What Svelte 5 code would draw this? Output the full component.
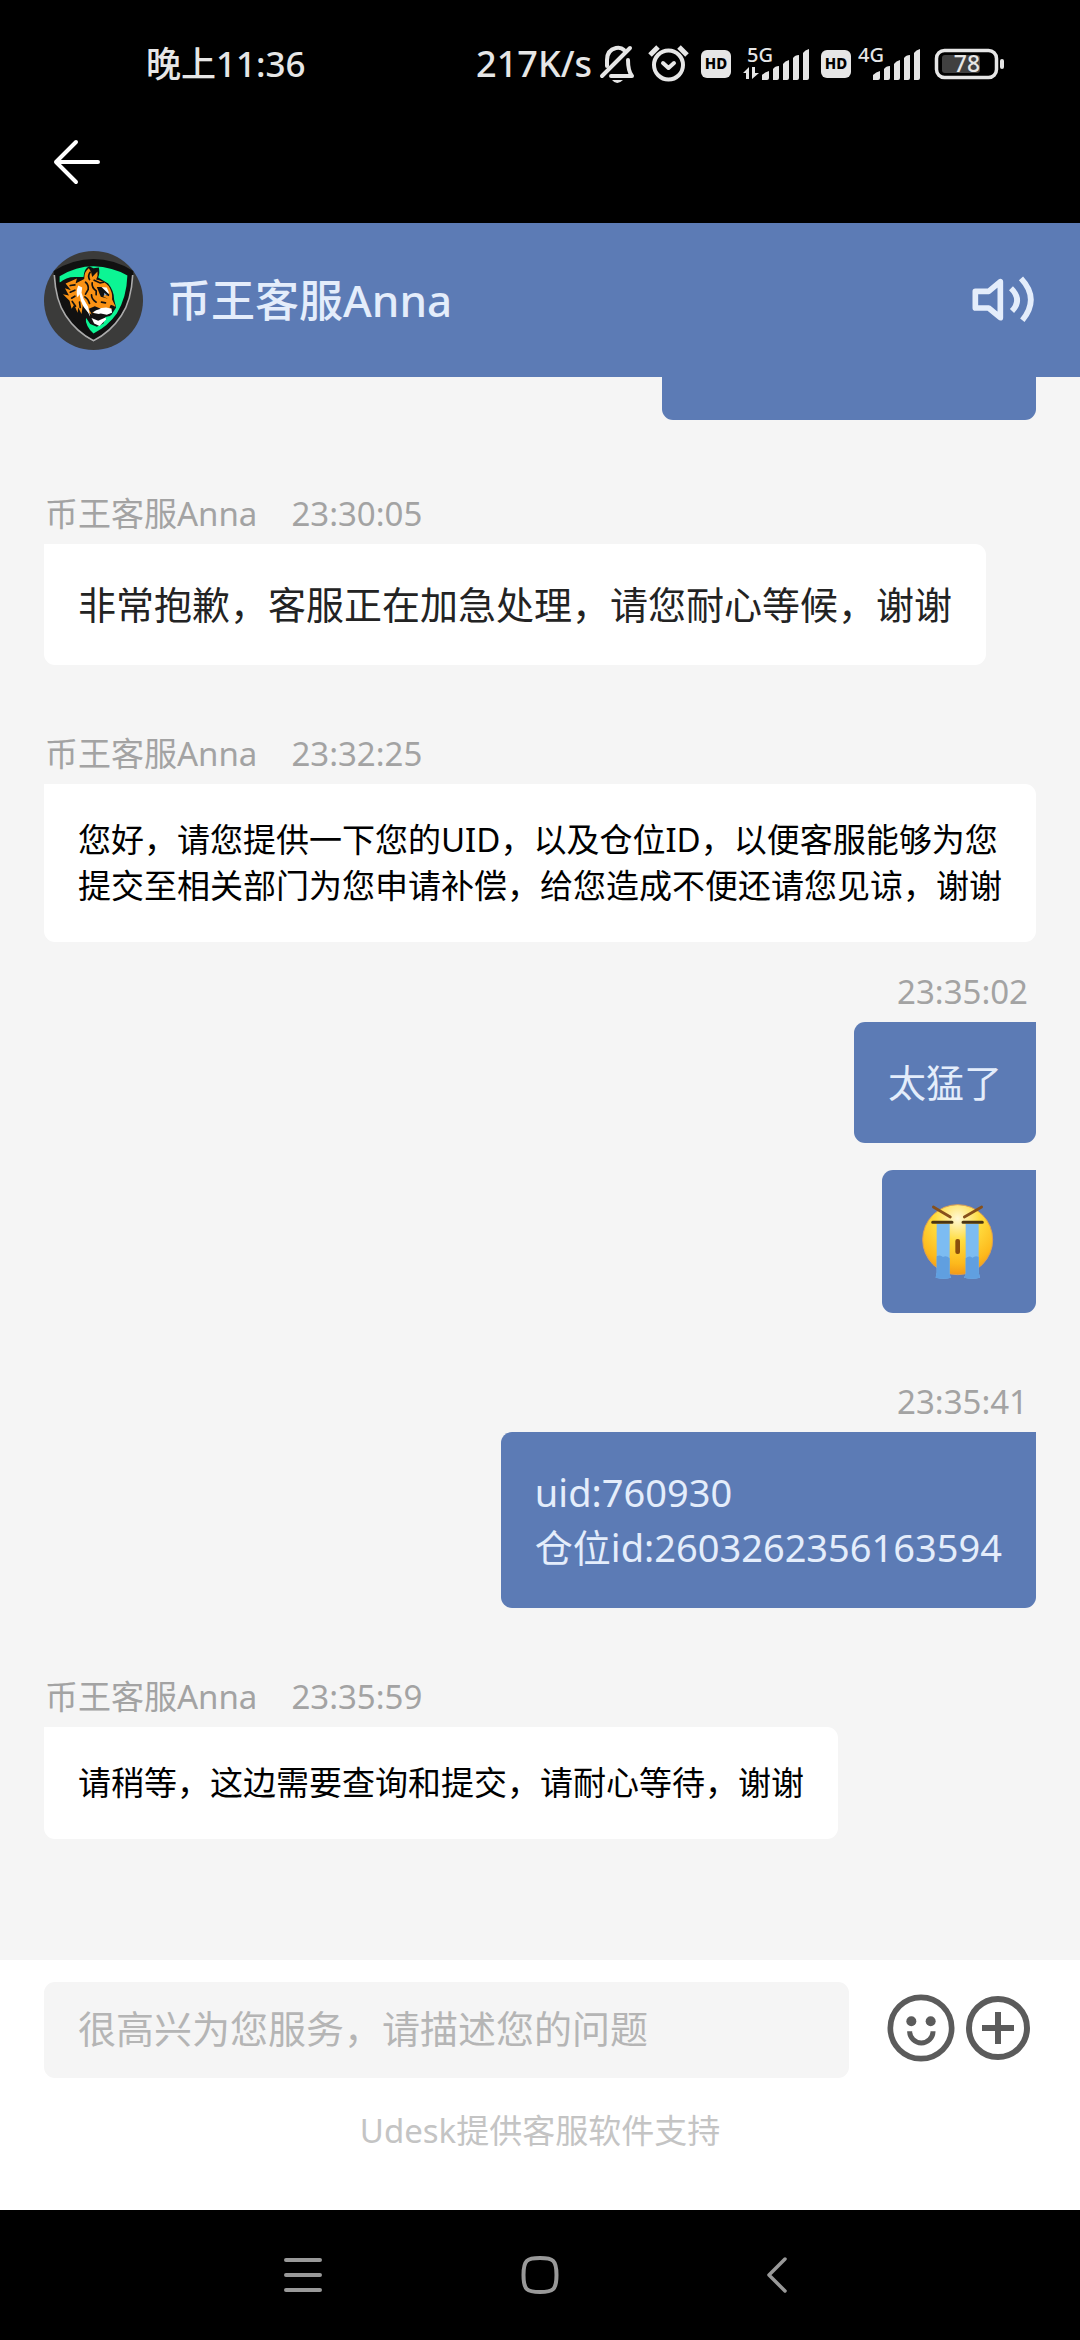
<script>
  const agent = '币王客服Anna';

  const messages = [
    { from: 'agent', time: '23:30:05', text: '非常抱歉，客服正在加急处理，请您耐心等候，谢谢', size: 'large' },
    {
      from: 'agent',
      time: '23:32:25',
      text: '您好，请您提供一下您的UID，以及仓位ID，以便客服能够为您提交至相关部门为您申请补偿，给您造成不便还请您见谅，谢谢',
      size: 'small'
    },
    { from: 'me', time: '23:35:02', text: '太猛了', size: 'large', close: true },
    { from: 'me', emoji: true, size: 'large', close: true },
    { from: 'me', time: '23:35:41', text: 'uid:760930\n仓位id:2603262356163594', size: 'large' },
    { from: 'agent', time: '23:35:59', text: '请稍等，这边需要查询和提交，请耐心等待，谢谢', size: 'small' }
  ];

  let draft = $state('');
</script>

{#snippet hd(x)}
  <svg width={x === 700 ? 34 : 32} height="56" viewBox="{x} 36 {x === 700 ? 34 : 32} 56" aria-hidden="true">
    <rect x={x + 1} y="50" width="30" height="28" rx="6" fill="#e6e6e6" />
    <text x={x + 16} y="69" text-anchor="middle" font-size="15" font-weight="800" fill="#000">HD</text>
  </svg>
{/snippet}

{#snippet bars(x)}
  <path
    fill="#e6e6e6"
    transform="translate({x} 0)"
    d="M0 80V75Q3 72 7 71V78Q7 80 5 80ZM11 80V69Q13 66 17 66V78Q17 80 15 80ZM21 80V64Q23 61 27 60V78Q27 80 25 80ZM31 80V58Q33 55 37 55V78Q37 80 35 80ZM41 80V53Q43 50 47 49V78Q47 80 45 80Z"
  />
{/snippet}

<div class="screen">
  <div class="status">
    <span class="clock">晚上11:36</span>
    <div class="indicators">
      <span>217K/s</span>
      <svg width="44" height="56" viewBox="598 36 44 56" fill="none" stroke="#e6e6e6" stroke-width="4" stroke-linecap="round" aria-hidden="true">
        <path d="M602 76L630 48" />
        <path d="M607 66V60Q607 50 616 48Q621 47 624 50" />
        <path d="M611 76H632Q628 71 628 60" stroke-linejoin="round" />
        <path d="M612 80H623Q617 86 612 80Z" fill="#e6e6e6" stroke="none" />
      </svg>
      <svg width="46" height="56" viewBox="648 36 46 56" fill="none" stroke="#e6e6e6" stroke-width="4" aria-hidden="true">
        <circle cx="668.5" cy="65" r="14.5" />
        <path d="M650 55L658 47M679 47L687 55" stroke-width="5" />
        <path d="M663 63L668.500 68L674 63" stroke-linecap="round" stroke-linejoin="round" />
      </svg>
      {@render hd(700)}
      <svg width="74" height="56" viewBox="740 36 74 56" fill="#e6e6e6" aria-hidden="true">
        <text x="747" y="62" font-size="20" font-weight="500">5G</text>
        <path d="M743 73L749 67V79H746V73ZM752 67H755V73H759L752 79Z" />
        {@render bars(762)}
      </svg>
      {@render hd(820)}
      <svg width="64" height="56" viewBox="858 36 64 56" fill="#e6e6e6" aria-hidden="true">
        <text x="858" y="62" font-size="20" font-weight="500">4G</text>
        {@render bars(873)}
      </svg>
      <svg width="78" height="56" viewBox="928 36 78 56" fill="#e6e6e6" aria-hidden="true">
        <rect x="936.500" y="50.500" width="60" height="27" rx="8" fill="none" stroke="#e6e6e6" stroke-width="3.500" />
        <rect x="942" y="55" width="38" height="18" rx="3" fill="#404040" />
        <rect x="1000" y="59" width="4" height="10" rx="2" />
        <text x="967" y="72" text-anchor="middle" font-size="23" font-weight="500">78</text>
      </svg>
    </div>
  </div>

  <nav class="appbar">
    <button aria-label="返回">
      <svg width="50" height="46" viewBox="0 0 50 46" fill="none" stroke="#fff" stroke-width="4" stroke-linecap="round" stroke-linejoin="round">
        <path d="M24 3L4 23L24 43M4 23H46" />
      </svg>
    </button>
  </nav>

  <header>
    <svg class="avatar" viewBox="11 14 298 298" role="img" aria-label={agent}>
      <circle cx="160" cy="163" r="149" fill="#3b3b3a" />
      <path d="M40 74Q98 38 160 38Q222 38 280 74Q278 160 246 210Q214 258 160 288Q106 258 74 210Q42 160 40 74Z" fill="#111" />
      <path d="M42 86Q46 164 76 208Q108 257 160 284Q212 257 244 208Q274 164 278 86" fill="none" stroke="#aaa" stroke-width="5" />
      <path d="M58 90Q108 60 160 60Q218 62 262 88Q260 154 230 202Q204 240 160 262Q136 242 136 214L126 140L90 110L58 108Z" fill="#0cf594" />
      <path d="M59 109Q76 92 104 92L130 92Q132 66 147 60L160 66L176 64Q180 82 174 94L204 112Q222 134 222 160L228 184L214 206L196 212L190 232L170 242L150 234L138 216Q134 222 138 244L82 202Q62 170 59 109Z" fill="#111" />
      <path d="M76 112L110 97L106 112L132 98Q132 76 146 66Q156 78 156 92L172 76Q174 90 168 100Q192 104 206 120Q218 138 216 160L226 180L210 192L188 186L170 194L160 208L146 200L136 186L128 176L124 204L114 184L112 200L102 176L94 188L88 164L68 144L86 148L74 126L92 132Z" fill="#fa9214" />
      <path d="M114 118Q106 138 112 154L118 144L122 164L130 182L144 200L150 212L144 182L130 158L124 140L126 124Z" fill="#fff" />
      <path d="M180 122L200 124L206 138L204 150L186 132ZM156 192L178 186L198 184L214 188L216 200L200 206L182 202L164 206Z" fill="#fff" />
      <path d="M154 216L174 224L196 214L198 220L188 230L178 240L162 232Z" fill="#fff" />
      <path d="M170 122L184 122L208 146L206 150L192 144L190 152L204 158L182 152ZM146 188L164 180L182 188L168 192L156 200L176 204L202 208L216 200L210 210L178 216L156 208ZM212 176L224 180L220 190L208 184Z" fill="#111" />
      <path d="M150 78Q142 88 148 100M162 102L180 110L190 108M136 108Q146 116 144 130L136 144M156 110Q154 124 168 134L168 146M134 152Q144 158 148 172M154 146Q154 160 168 168M104 116L90 118M104 132L90 138M104 150L94 156M96 166L106 180M118 168L120 184M184 168L196 170" fill="none" stroke="#111" stroke-width="5" stroke-linecap="round" />
      <path d="M192 140L200 146L192 149Z" fill="#7da3c9" />
    </svg>
    <h1>{agent}</h1>
    <button class="sound" aria-label="声音">
      <svg width="66" height="55" viewBox="990 157 198 165" fill="none" stroke="#e4edfb" stroke-width="17">
        <path d="M1006 212H1046L1081 183V291L1046 262H1006Z" stroke-linejoin="round" />
        <path d="M1113 203Q1148 237 1116 271M1143 173Q1200 234 1147 299" />
      </svg>
    </button>
  </header>

  <main>
    <div class="earlier"></div>
    {#each messages as m}
      <section class={[m.from, m.close && 'close']}>
        {#if m.time}
          <div class="meta">
            {#if m.from === 'agent'}<span>{agent}</span>{/if}
            <time>{m.time}</time>
          </div>
        {/if}
        <div class={['bubble', m.size]}>
          {#if m.emoji}
            <svg width="86" height="77" viewBox="405 732 258 231" role="img" aria-label="大哭">
              <defs>
                <radialGradient id="face" cx="0.5" cy="0.2" r="0.8">
                  <stop offset="0" stop-color="#fff8d6" />
                  <stop offset="0.4" stop-color="#ffdc3e" />
                  <stop offset="0.8" stop-color="#fdb91c" />
                  <stop offset="1" stop-color="#f39a16" />
                </radialGradient>
              </defs>
              <circle cx="530" cy="842" r="105" fill="url(#face)" stroke="#dda052" stroke-width="3" />
              <path d="M467 794H506V946L510 956Q488 962 464 956L467 940ZM554 794H593V940L597 956Q574 962 549 956L554 946Z" fill="#7cbcf2" />
              <path d="M467 892Q478 886 486 894Q496 888 506 898V946L510 956Q488 962 464 956L467 940ZM554 898Q564 888 574 896Q584 888 593 894V940L597 956Q574 962 549 956L554 946Z" fill="#609fe0" />
              <path d="M457 744L508 774M602 744L550 774" stroke="#87501a" stroke-width="8" stroke-linecap="round" />
              <path d="M455 790H513M546 790H604" stroke="#4b3512" stroke-width="9" stroke-linecap="round" />
              <rect x="523" y="840" width="14" height="45" rx="6" fill="#8b4e0d" />
            </svg>
          {:else}
            {m.text}
          {/if}
        </div>
      </section>
    {/each}
  </main>

  <footer>
    <form onsubmit={(e) => e.preventDefault()}>
      <input type="text" bind:value={draft} aria-label="消息" placeholder="很高兴为您服务，请描述您的问题" />
      <div class="tools">
        <button type="button" aria-label="表情">
          <svg width="68" height="68" viewBox="0 0 204 204" fill="none" stroke="#5b5b5b">
            <circle cx="102" cy="102" r="92" stroke-width="17" />
            <path d="M68 112A34 34 0 0 0 138 112" stroke-width="15" />
            <circle cx="73" cy="82" r="15" fill="#5b5b5b" stroke="none" />
            <circle cx="131" cy="82" r="15" fill="#5b5b5b" stroke="none" />
          </svg>
        </button>
        <button type="button" aria-label="更多">
          <svg width="64" height="64" viewBox="0 0 192 192" fill="none" stroke="#5b5b5b" stroke-width="18">
            <circle cx="96" cy="96" r="87" />
            <path d="M96 48V144M48 96H144" />
          </svg>
        </button>
      </div>
    </form>
    <p>Udesk提供客服软件支持</p>
  </footer>

  <nav class="system">
    <button aria-label="最近任务">
      <svg width="40" height="40" viewBox="0 0 40 40" stroke="#999" stroke-width="4" stroke-linecap="round">
        <path d="M3 5H37M3 20H37M3 35H37" />
      </svg>
    </button>
    <button aria-label="主屏幕">
      <svg width="40" height="40" viewBox="0 0 40 40" fill="none" stroke="#999" stroke-width="4">
        <path d="M20 3C33 3 36.500 5 36.500 20C36.500 35 33 37 20 37C7 37 3.500 35 3.500 20C3.500 5 7 3 20 3Z" />
      </svg>
    </button>
    <button aria-label="后退">
      <svg width="40" height="40" viewBox="0 0 40 40" fill="none" stroke="#999" stroke-width="3.500" stroke-linecap="round" stroke-linejoin="round">
        <path d="M28 4L12 20L28 36" />
      </svg>
    </button>
  </nav>
</div>

<style>
  :global(body) {
    margin: 0;
  }

  .screen {
    display: flex;
    flex-direction: column;
    min-height: 100vh;
    background: #f5f5f5;
    font-family: 'Noto Sans', 'Noto Sans CJK SC', sans-serif;
    font-size: 33px;
    line-height: 46px;
  }

  button {
    display: flex;
    align-items: center;
    justify-content: center;
    padding: 0;
    border: 0;
    background: none;
  }

  svg {
    display: block;
    flex: none;
  }

  .status {
    display: flex;
    align-items: center;
    justify-content: space-between;
    height: 72px;
    padding: 28px 74px 0 146px;
    background: #000;
    color: #e6e6e6;
    font-size: 36px;
    font-weight: 500;
  }

  .clock {
    font-size: 35px;
  }

  .indicators {
    display: flex;
    align-items: center;
    gap: 6px;
  }

  .appbar {
    display: flex;
    align-items: center;
    height: 123px;
    padding: 0 52px;
    background: #000;
  }

  header {
    display: flex;
    align-items: center;
    gap: 24px;
    height: 154px;
    padding: 0 44px;
    background: #5c7bb5;
  }

  .avatar {
    width: 99px;
    height: 99px;
  }

  h1 {
    margin: 0;
    color: #e4edfb;
    font-size: 44px;
    font-weight: 500;
    line-height: 62px;
  }

  .sound {
    margin-left: auto;
  }

  main {
    display: flex;
    flex: 1;
    flex-direction: column;
    padding: 0 44px 66px;
  }

  .earlier {
    align-self: flex-end;
    width: 374px;
    height: 43px;
    margin-bottom: 5px;
    border-radius: 0 0 11px 11px;
    background: #5c7bb5;
  }

  section {
    display: flex;
    flex-direction: column;
    align-items: flex-start;
    padding-top: 66px;
  }

  .me {
    align-items: flex-end;
  }

  .close {
    padding-top: 27px;
  }

  .meta {
    display: flex;
    gap: 34px;
    padding: 0 8px 7px 1px;
    color: #a3a3a3;
  }

  .bubble {
    padding: 33px 34px;
    border-radius: 0 11px 11px 11px;
    background: #fff;
    color: #000;
    white-space: pre-line;
  }

  .large {
    color: #232323;
    font-size: 38px;
    line-height: 55px;
  }

  .me .bubble {
    border-radius: 11px 0 11px 11px;
    background: #5c7bb5;
    color: #e4edfb;
  }

  footer {
    padding: 22px 44px 56px;
    background: #fff;
  }

  form {
    display: flex;
    align-items: flex-start;
    gap: 33px;
  }

  input {
    flex: 1;
    min-width: 0;
    height: 96px;
    box-sizing: border-box;
    padding: 0 34px 4px;
    border: 0;
    border-radius: 11px;
    background: #f5f5f5;
    color: #232323;
    font-family: inherit;
    font-size: 38px;
  }

  input::placeholder {
    color: #b5b5b5;
    opacity: 1;
  }

  .tools {
    display: flex;
  }

  .tools button {
    width: 77px;
    height: 92px;
  }

  p {
    margin: 30px 0 0;
    color: #c4c4c4;
    text-align: center;
  }

  .system {
    display: flex;
    align-items: center;
    justify-content: center;
    gap: 197px;
    height: 130px;
    background: #000;
  }
</style>
